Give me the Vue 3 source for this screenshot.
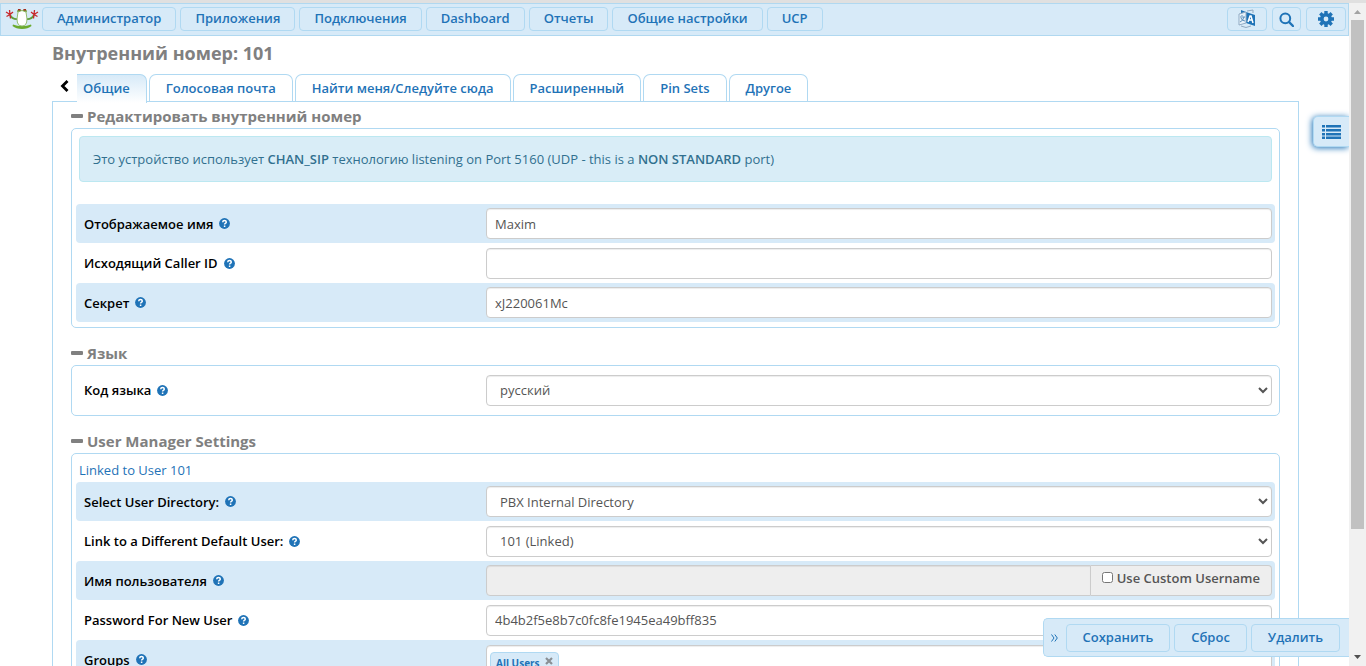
<script setup>
import { ref } from 'vue'

const menu = ['Администратор', 'Приложения', 'Подключения', 'Dashboard', 'Отчеты', 'Общие настройки', 'UCP']
const tabs = ['Общие', 'Голосовая почта', 'Найти меня/Следуйте сюда', 'Расширенный', 'Pin Sets', 'Другое']
const activeTab = ref('Общие')
const custom = ref(false)

const sections = [
  {
    title: 'Редактировать внутренний номер',
    notice: true,
    rows: [
      { id: 'name', label: 'Отображаемое имя', type: 'text', value: 'Maxim', striped: true },
      { id: 'cid', label: 'Исходящий Caller ID', type: 'text', value: '' },
      { id: 'secret', label: 'Секрет', type: 'text', value: 'xJ220061Mc', striped: true },
    ],
  },
  {
    title: 'Язык',
    rows: [{ id: 'lang', label: 'Код языка', type: 'select', value: 'русский' }],
  },
  {
    title: 'User Manager Settings',
    link: 'Linked to User 101',
    rows: [
      { id: 'dir', label: 'Select User Directory:', type: 'select', value: 'PBX Internal Directory', striped: true },
      { id: 'link', label: 'Link to a Different Default User:', type: 'select', value: '101 (Linked)' },
      { id: 'user', label: 'Имя пользователя', type: 'custom', value: '', striped: true },
      { id: 'pass', label: 'Password For New User', type: 'text', value: '4b4b2f5e8b7c0fc8fe1945ea49bff835' },
      { id: 'groups', label: 'Groups', type: 'tags', value: 'All Users', striped: true },
    ],
  },
]
const actions = ['Сохранить', 'Сброс', 'Удалить']
</script>

<template>
  <div class="window">
    <div class="page">
      <nav class="navbar">
        <a class="logo" href="#" aria-label="FreePBX">
          <svg width="34" height="22" viewBox="0 0 34 22">
            <path d="M5 7Q8 12 13 11M29 7Q26 12 21 11" fill="none" stroke="#5f9d3c" stroke-width="1.8" />
            <path d="M5 6.5L1 4M5 6.5L4.5 2M5 6.5L8 4M5 6.5L1.5 8.500M5 6.500L5.500 10.500M29 6.500L33 4M29 6.500L29.500 2M29 6.500L26 4M29 6.500L32.500 8.500M29 6.500L28.500 10.500" stroke="#c8282d" stroke-width="1.3" />
            <path d="M8 16.500Q12 18 17 18T26 16.500L26.500 18Q23 21 17 21T7.500 18Z" fill="#6bab2e" />
            <path d="M13 4Q17 1 21 4L22 11Q22 18 17 18T12 11Z" fill="#fff" stroke="#93bd70" stroke-width="1" />
            <path d="M12 4Q12 1 15 1l1 1.500h2l1-1.500q3 0 3 3l-2-.5-3-1-3 1z" fill="#75a53b" />
            <path d="M13 1.800h2.500M18.500 1.800h2.500" stroke="#a42b20" stroke-width="1.500" />
          </svg>
        </a>
        <button v-for="m in menu" :key="m" class="btn">{{ m }}</button>
        <div class="tools">
          <button class="btn tool wide" aria-label="Язык">
            <svg width="18" height="20" viewBox="0 0 18 20">
              <path d="M8 3l9 3v11l-9-3z" fill="#1f73b7" />
              <path d="M3 1l5 2v2L3 5z" fill="#1f73b7" />
              <path d="M1 5l7-2v11l-7 2z" fill="#e8f2fa" stroke="#91abc4" stroke-width="1" />
              <path d="M9 2l6-1v3M3 17q5 3 10 0" fill="none" stroke="#91a9c0" stroke-width="1" />
              <path d="M4 6v1M2 8h5M6 8q-1 4-4 5M3 9q1 3 4 3" fill="none" stroke="#5d8fba" stroke-width="1" />
              <path d="M10 13l2-6h1l2 7M11 11h3" fill="none" stroke="#fff" stroke-width="1.5" />
            </svg>
          </button>
          <button class="btn tool" aria-label="Поиск">
            <svg width="15" height="15" viewBox="0 0 15 15">
              <circle cx="6.3" cy="6.3" r="4.9" fill="none" stroke="#1f73b7" stroke-width="2" />
              <path d="M10 10l4 4" stroke="#1f73b7" stroke-width="2.4" stroke-linecap="round" />
            </svg>
          </button>
          <button class="btn tool wide" aria-label="Настройки">
            <svg width="16" height="16" viewBox="0 0 16 16" fill="none" stroke="#1f73b7">
              <circle cx="8" cy="8" r="4.2" stroke-width="3.6" />
              <path d="M8 0v3M8 13v3M0 8h3M13 8h3M2.3 2.3l2.2 2.2M11.5 11.5l2.2 2.2M2.3 13.7l2.2-2.2M11.5 4.5l2.2-2.2" stroke-width="3.4" />
            </svg>
          </button>
        </div>
      </nav>

      <main class="content">
        <h1>Внутренний номер: 101</h1>
        <div class="tabbar">
          <button class="back" aria-label="Назад">
            <svg width="9" height="12" viewBox="0 0 9 12"><path d="M7.5 1L2.5 6l5 5" fill="none" stroke="#000" stroke-width="2.8" /></svg>
          </button>
          <div class="tabs" role="tablist">
            <button
              v-for="t in tabs"
              :key="t"
              class="tab"
              :class="{ active: t === activeTab }"
              role="tab"
              :aria-selected="t === activeTab"
              @click="activeTab = t"
            >{{ t }}</button>
          </div>
        </div>

        <div class="panel">
          <section v-for="s in sections" :key="s.title">
            <h2><span class="minus"></span>{{ s.title }}</h2>
            <div class="box">
              <div v-if="s.notice" class="notice">
                Это устройство использует <b>CHAN_SIP</b> технологию listening on Port 5160 (UDP - this is a <b>NON STANDARD</b> port)
              </div>
              <a v-if="s.link" class="userlink" href="#">{{ s.link }}</a>
              <div v-for="r in s.rows" :key="r.id" class="row" :class="{ striped: r.striped }">
                <div class="caption">
                  <label :for="r.id">{{ r.label }}</label>
                  <svg class="help" width="11" height="11" viewBox="0 0 11 11">
                    <circle cx="5.5" cy="5.5" r="5.4" fill="#1f73b7" />
                    <path d="M3.7 4.2Q3.8 2.6 5.5 2.6T7.3 4.1Q7.3 5 6.3 5.4 5.6 5.7 5.6 6.6M5.6 7.5v1.5" fill="none" stroke="#fff" stroke-width="1.5" />
                  </svg>
                </div>
                <input v-if="r.type === 'text'" :id="r.id" class="field" type="text" :value="r.value" />
                <select v-else-if="r.type === 'select'" :id="r.id" class="field">
                  <option>{{ r.value }}</option>
                </select>
                <div v-else-if="r.type === 'custom'" class="group">
                  <input :id="r.id" class="field" type="text" :disabled="!custom" />
                  <label class="addon"><input v-model="custom" type="checkbox" />Use Custom Username</label>
                </div>
                <div v-else :id="r.id" class="field tags">
                  <span class="tag">{{ r.value }}
                    <button aria-label="Удалить группу">
                      <svg width="8" height="8" viewBox="0 0 8 8"><path d="M1 1l6 6M7 1L1 7" stroke="#8a8f94" stroke-width="2.2" /></svg>
                    </button>
                  </span>
                </div>
              </div>
            </div>
          </section>
        </div>
      </main>

      <button class="sidelist" aria-label="Список">
        <svg width="19" height="14" viewBox="0 0 19 14" fill="#1f73b7">
          <path d="M0 0h3v2.500H0zM4 0h15v2.500H4zM0 4h3v2.500H0zM4 4h15v2.500H4zM0 8h3v2.500H0zM4 8h15v2.500H4zM0 11.500h3V14H0zM4 11.500h15V14H4z" />
        </svg>
      </button>

      <div class="actionbar">
        <button class="collapse" aria-label="Свернуть">
          <svg width="7" height="8" viewBox="0 0 7 8"><path d="M.5.5L3 4 .5 7.5M3.8.5L6.3 4 3.8 7.5" fill="none" stroke="#1f73b7" stroke-width="1" /></svg>
        </button>
        <button v-for="a in actions" :key="a" class="btn big">{{ a }}</button>
      </div>
    </div>

    <div class="scroll" aria-hidden="true">
      <svg width="7" height="4" viewBox="0 0 7 4"><path d="M0 4l3.5-4L7 4z" fill="#a3a3a3" /></svg>
      <div class="track"><div class="thumb"></div></div>
      <svg width="7" height="4" viewBox="0 0 7 4"><path d="M0 0h7L3.5 4z" fill="#505050" /></svg>
    </div>
  </div>
</template>

<style>
html, body { height: 100%; overflow: hidden; background: #fff; }
</style>

<style scoped>
.window {
  box-sizing: border-box;
  display: flex;
  height: 100vh;
  border-top: 3px solid #e0e0e0;
  overflow: hidden;
  font: 13px/18px "Open Sans", "Noto Sans", sans-serif;
  color: #555;
}
.window *, .window *::before { box-sizing: border-box; }
button { font: inherit; cursor: pointer; margin: 0; }
svg { display: block; flex: none; }
a { color: #1f73b7; text-decoration: none; }
b { font-weight: 600; }
.page { position: relative; flex: 1; min-width: 0; overflow: hidden; }

.navbar {
  display: flex;
  align-items: flex-start;
  gap: 4px;
  height: 33px;
  padding: 3px 2px 0 4px;
  background: #d7eaf8;
  border: 1px solid #b0d8f0;
}
.logo { width: 33px; padding-top: 1px; }
.btn {
  height: 24px;
  padding: 0 14px 2px;
  border: 1px solid #b0d9f2;
  border-radius: 4px;
  background: #d7eaf8;
  color: #1f73b7;
  font-weight: 600;
  white-space: nowrap;
}
.tools { display: flex; gap: 5px; margin-left: auto; }
.tool { display: flex; align-items: center; justify-content: center; width: 29px; padding: 0; }
.tool.wide { width: 40px; }

.content { padding: 0 50px 0 52px; }
h1 { margin: 5px 0 9px; font-size: 18px; line-height: 24px; font-weight: 700; color: #808080; }
.tabbar { display: flex; margin-bottom: -1px; position: relative; }
.back { display: flex; align-items: center; justify-content: center; width: 24px; height: 24px; margin-right: 1px; padding: 0; border: 0; background: none; }
.tabs { display: flex; gap: 2px; flex: 1; margin-right: 13px; border-bottom: 1px solid #b0d9f2; }
.tab {
  height: 27px;
  padding: 0 16px;
  border: 1px solid #b0d9f2;
  border-bottom: 0;
  border-radius: 7px 7px 0 0;
  background: #fff;
  color: #1f73b7;
  font-weight: 600;
  white-space: nowrap;
}
.tab.active {
  height: 29px;
  margin-bottom: -2px;
  padding-left: 6px;
  padding-bottom: 2px;
  border-left: 0;
  border-top-left-radius: 0;
  background: linear-gradient(#d7eaf8, #fff);
}

.panel { padding: 3px 18px 0; border: 1px solid #b0d9f2; border-bottom: 0; }
section { margin-bottom: 14px; }
h2 { display: flex; align-items: center; gap: 4px; margin: 0; padding-bottom: 1px; font-size: 15px; line-height: 22px; font-weight: 700; color: #808080; }
.minus { width: 12px; height: 4px; border-radius: 1px; background: #808080; }
.box { padding: 4px 4px 5px; border: 1px solid #b0d9f2; border-radius: 5px; }
.notice {
  margin: 3px 3px 22px;
  padding: 13px;
  line-height: 18px;
  border: 1px solid #bce8f1;
  border-radius: 4px;
  background: #d9edf7;
  color: #31708f;
}
.userlink { display: block; margin: 0 3px; line-height: 24px; }
.row {
  display: grid;
  grid-template-columns: 1fr 2fr;
  column-gap: 9px;
  align-items: center;
  height: 40px;
  padding: 0 3px 0 8px;
  border-radius: 4px;
}
.row.striped { height: 39px; background: #d7eaf8; }
.caption { display: flex; align-items: center; gap: 6px; color: #000; font-weight: 600; }
.field {
  width: 100%;
  height: 31px;
  padding: 0 8px;
  border: 1px solid #ccc;
  border-radius: 4px;
  background: #fff;
  box-shadow: inset 0 1px 1px rgba(0, 0, 0, 0.075);
  color: #555;
  font: inherit;
}
select.field { padding: 0 0 0 9px; }
.group { display: flex; }
.group .field { flex: 1; width: auto; min-width: 0; border-radius: 4px 0 0 4px; background: #eee; }
.addon {
  display: flex;
  align-items: center;
  gap: 4px;
  padding: 0 11px 6px;
  border: 1px solid #ccc;
  border-left: 0;
  border-radius: 0 4px 4px 0;
  background: #eee;
  font-weight: 600;
}
.addon input { width: 11px; height: 11px; margin: 0; }
.tags { align-self: start; height: auto; margin-top: 5px; padding: 6px 3px 3px; }
.tag {
  display: inline-flex;
  align-items: center;
  gap: 5px;
  height: 22px;
  padding: 0 5px;
  border: 1px solid #b0d9f2;
  border-radius: 4px;
  background: #d7eaf8;
  color: #1f73b7;
  font-size: 10px;
  font-weight: 700;
}
.tag button { padding: 0 0 4px; border: 0; background: none; }

.sidelist {
  position: absolute;
  top: 113px;
  right: 0;
  display: flex;
  align-items: center;
  justify-content: center;
  width: 36px;
  height: 31px;
  padding: 0;
  border: 1px solid #b0d9f2;
  border-right: 0;
  border-radius: 5px 0 0 5px;
  background: #d7eaf8;
  box-shadow: -1px 1px 6px #1f73b7;
}
.actionbar {
  position: absolute;
  right: 0;
  bottom: 9px;
  display: flex;
  align-items: center;
  gap: 4px;
  height: 39px;
  padding: 0 9px 0 0;
  border: 1px solid #b0d9f2;
  border-right: 0;
  border-radius: 5px 0 0 5px;
  background: #d7eaf8;
}
.collapse { display: flex; align-items: center; justify-content: flex-end; width: 18px; height: 28px; padding: 0 4px 0 0; border: 0; background: none; }
.btn.big { height: 28px; padding: 0 16px 2px; }

.scroll {
  display: flex;
  flex-direction: column;
  align-items: center;
  width: 17px;
  padding: 7px 2px;
  background: #f1f1f1;
}
.track { flex: 1; width: 100%; padding: 6px 0; }
.thumb { width: 13px; height: 81%; background: #c1c1c1; }
</style>
